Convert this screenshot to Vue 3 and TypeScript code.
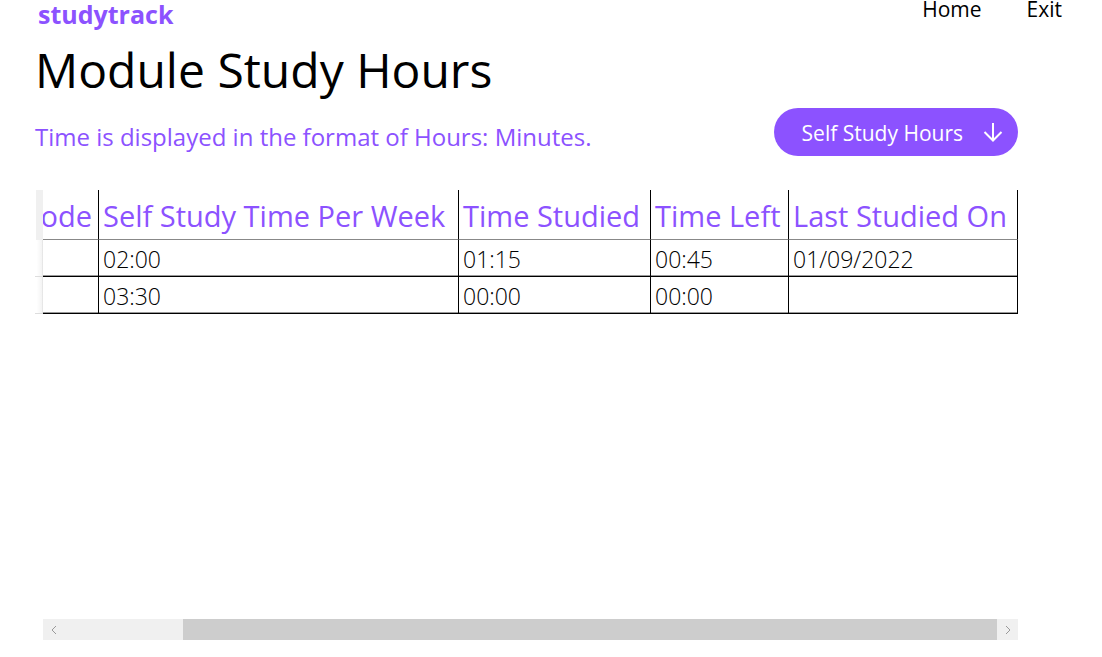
<script setup lang="ts">
import { ref } from 'vue'

interface StudyRecord {
  code: string
  perWeek: string
  studied: string
  left: string
  lastStudied: string
}

const columns: { key: keyof StudyRecord; label: string }[] = [
  { key: 'code', label: 'Module Code' },
  { key: 'perWeek', label: 'Self Study Time Per Week' },
  { key: 'studied', label: 'Time Studied' },
  { key: 'left', label: 'Time Left' },
  { key: 'lastStudied', label: 'Last Studied On' },
]

const records = ref<StudyRecord[]>([
  { code: '', perWeek: '02:00', studied: '01:15', left: '00:45', lastStudied: '01/09/2022' },
  { code: '', perWeek: '03:30', studied: '00:00', left: '00:00', lastStudied: '' },
])
</script>

<template>
  <div class="page">
    <header class="top">
      <a class="brand" href="#">studytrack</a>
      <nav class="nav">
        <a href="#">Home</a>
        <a href="#">Exit</a>
      </nav>
    </header>

    <main class="content">
      <h1>Module Study Hours</h1>
      <div class="toolbar">
        <p>Time is displayed in the format of Hours: Minutes.</p>
        <button class="pill" type="button">
          <span>Self Study Hours</span>
          <svg width="20" height="20" viewBox="0 0 20 20" aria-hidden="true">
            <path d="M10 1V18.500M1.500 10L10 18.500L18.500 10" />
          </svg>
        </button>
      </div>

      <section class="grid">
        <div class="gutter" aria-hidden="true">
          <span class="gutter-head"></span>
          <span v-for="(_, i) in records" :key="i" class="gutter-row"></span>
        </div>
        <div class="viewport">
          <table>
            <colgroup>
              <col v-for="c in columns" :key="c.key" :class="'col-' + c.key" />
            </colgroup>
            <thead>
              <tr>
                <th v-for="c in columns" :key="c.key" scope="col">{{ c.label }}</th>
              </tr>
            </thead>
            <tbody>
              <tr v-for="(r, i) in records" :key="i">
                <td v-for="c in columns" :key="c.key">{{ r[c.key] }}</td>
              </tr>
            </tbody>
          </table>
        </div>
      </section>

      <div class="scrollbar">
        <button type="button" aria-label="Scroll left">
          <svg width="8" height="10" viewBox="0 0 8 10"><path d="M6 1L2 5L6 9" /></svg>
        </button>
        <div class="track"><div class="thumb"></div></div>
        <button type="button" aria-label="Scroll right">
          <svg width="8" height="10" viewBox="0 0 8 10"><path d="M2 1L6 5L2 9" /></svg>
        </button>
      </div>
    </main>
  </div>
</template>

<style>
body {
  background: #fff;
}
</style>

<style scoped>
.page {
  display: flex;
  flex-direction: column;
  min-height: 100vh;
  box-sizing: border-box;
  padding-bottom: 17px;
  font-family: "Open Sans", "Noto Sans", sans-serif;
  color: #000;
}
.top {
  display: flex;
  justify-content: space-between;
  height: 40px;
  padding: 0 40px 0 38px;
}
.top a {
  text-decoration: none;
}
.brand {
  color: #8c52ff;
  font-size: 25px;
  font-weight: 700;
  line-height: 28px;
}
.nav {
  display: flex;
  gap: 45px;
}
.nav a {
  color: #000;
  font-size: 21px;
  line-height: 18px;
}
.content {
  display: flex;
  flex: 1;
  flex-direction: column;
  padding: 0 84px 0 35px;
}
h1 {
  margin: 0;
  font-size: 48px;
  font-weight: 400;
  line-height: 60px;
}
.toolbar {
  display: flex;
  align-items: center;
  justify-content: space-between;
  margin-top: 8px;
}
p {
  margin: 0;
  padding-top: 10px;
  color: #8c52ff;
  font-size: 24px;
  line-height: 32px;
}
.pill {
  display: flex;
  align-items: center;
  gap: 20px;
  height: 48px;
  padding: 0 15px 0 28px;
  border: 0;
  border-radius: 24px;
  background: #8c52ff;
  color: #fff;
  font: inherit;
  font-size: 21px;
}
.pill span {
  padding-top: 2px;
}
.pill svg path {
  fill: none;
  stroke: #fff;
  stroke-width: 2;
}
.grid {
  display: flex;
  flex: 1;
  margin-top: 34px;
}
.gutter {
  display: flex;
  flex-direction: column;
  width: 8px;
}
.gutter-head {
  height: 50px;
  margin-left: 1px;
  background: #f0f0f0;
}
.gutter-row {
  height: 37px;
  box-sizing: border-box;
  border-bottom: 1px solid #ddd;
  background: linear-gradient(90deg, #fff 20%, #f4f4f4 85%, #ddd);
}
.viewport {
  display: flex;
  flex: 1;
  justify-content: flex-end;
  align-items: flex-start;
  min-width: 0;
  overflow: hidden;
}
table {
  flex: none;
  width: 1110px;
  table-layout: fixed;
  border-collapse: separate;
  border-spacing: 0;
}
.col-code { width: 191px; }
.col-perWeek { width: 360px; }
.col-studied { width: 192px; }
.col-left { width: 138px; }
.col-lastStudied { width: 229px; }
th,
td {
  box-sizing: border-box;
  padding: 2px 0 0 4px;
  border-right: 1px solid #000;
  text-align: left;
  white-space: nowrap;
}
th {
  height: 50px;
  border-bottom: 1px solid #888;
  color: #8c52ff;
  font-size: 29px;
  font-weight: 400;
  line-height: 40px;
}
td {
  height: 37px;
  border-bottom: 1px solid #000;
  box-shadow: inset 0 -1px #999;
  font-size: 23px;
  font-weight: 300;
  line-height: 32px;
}
.scrollbar {
  display: flex;
  height: 21px;
  margin-left: 8px;
  background: #f0f0f0;
}
.scrollbar button {
  display: flex;
  align-items: center;
  justify-content: center;
  width: 21px;
  padding: 0;
  border: 0;
  background: #f0f0f0;
}
.scrollbar path {
  fill: none;
  stroke: #999;
  stroke-width: 1;
}
.track {
  display: flex;
  flex: 1;
}
.track::before {
  flex: 119;
  content: "";
}
.thumb {
  flex: 814;
  background: #cdcdcd;
}
</style>
